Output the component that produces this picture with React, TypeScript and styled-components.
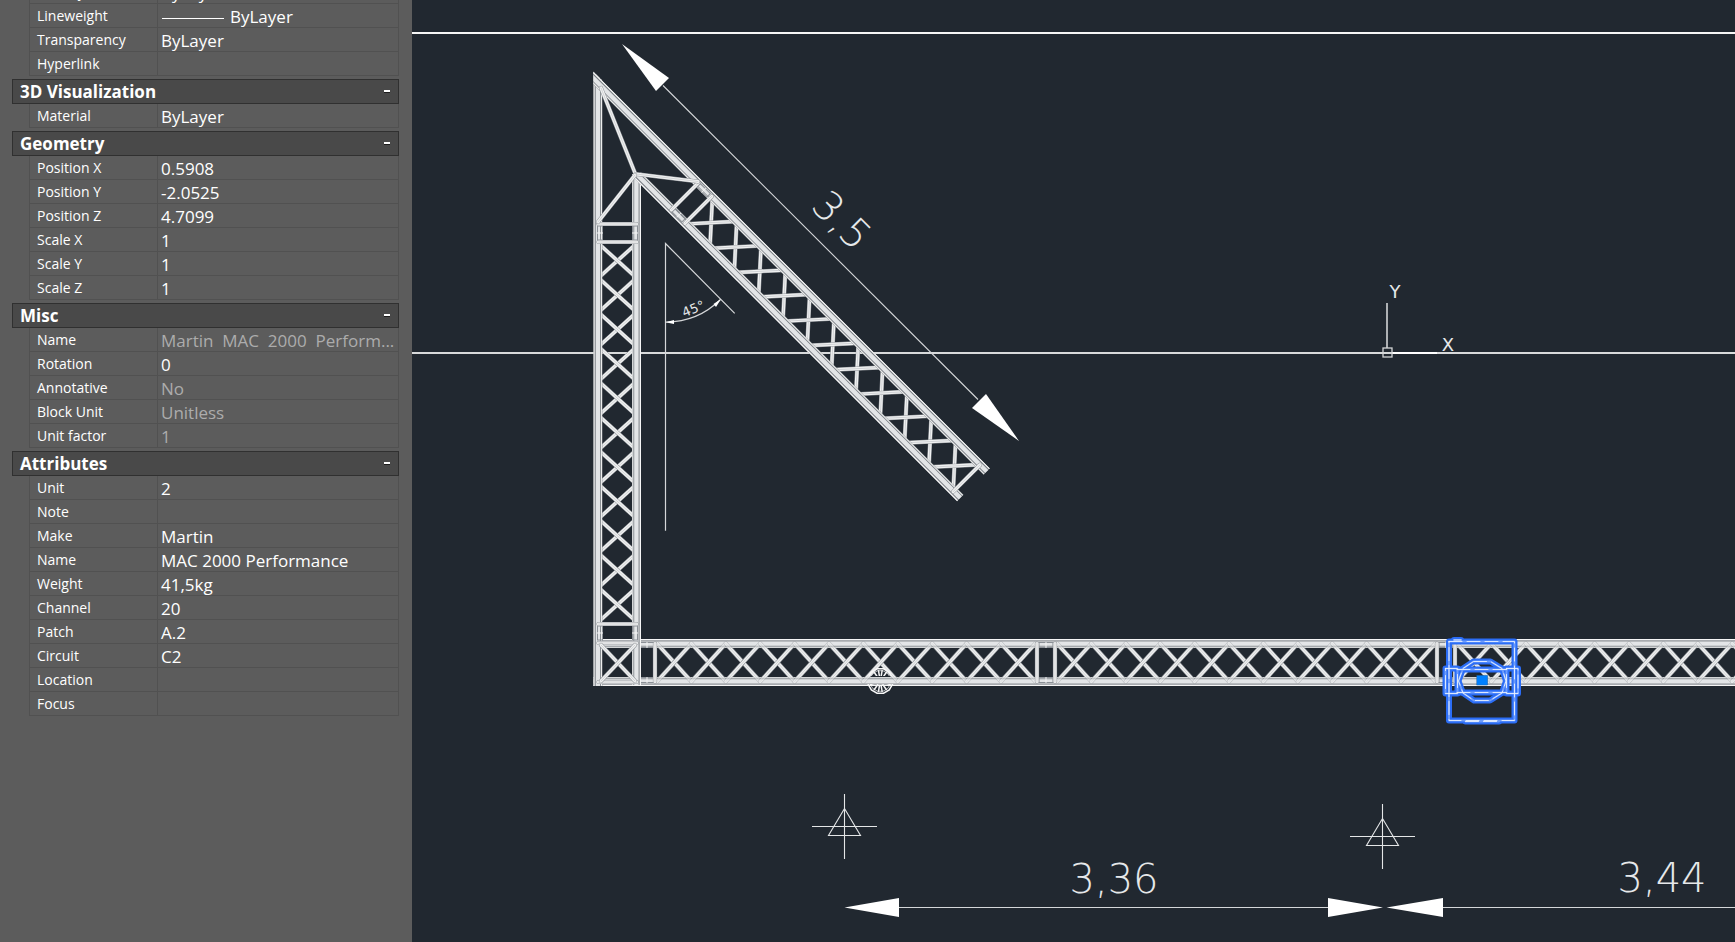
import React, { useState } from "react";
import styled, { createGlobalStyle } from "styled-components";

const GlobalStyle = createGlobalStyle`
  *, *::before, *::after { box-sizing: border-box; }
  body {
    margin: 0;
    background: #212830;
    font-family: "Open Sans", "Noto Sans", sans-serif;
  }
`;

/* ---------- Shell ---------- */

const Workspace = styled.div`
  display: flex;
  height: 100vh;
  overflow: hidden;
`;

const Palette = styled.aside`
  flex: 0 0 412px;
  overflow: hidden;
  background: #5c5c5c;
  color: #fff;
`;

/* The palette list is scrolled part of the way through its first row. */
const PaletteList = styled.div`
  display: flex;
  flex-direction: column;
  gap: 3px;
  margin: -20px 13px 0 12px;
`;

const ModelSpace = styled.main`
  flex: 1;
  min-width: 0;
  background: #212830;
`;

const Drawing = styled.svg`
  display: block;
  width: 100%;
  height: 100%;
`;

/* ---------- Property palette ---------- */

const Section = styled.section`
  display: flex;
  flex-direction: column;
`;

const SectionHeader = styled.button`
  display: flex;
  align-items: center;
  justify-content: space-between;
  height: 25px;
  padding: 0 8px 0 7px;
  border: 1px solid #303030;
  background: #494949;
  color: #fff;
  font: 700 17px/23px "Open Sans", "Noto Sans", sans-serif;
  text-align: left;
  cursor: pointer;
`;

const ToggleMark = styled.span`
  width: 6px;
  height: 3px;
  border-top: 2px solid #fff;
  border-bottom: 1px solid #1c1c1c;
`;

const PropertyTable = styled.table`
  margin-left: 17px;
  border-spacing: 0;
  border-left: 1px solid #515151;
  border-right: 1px solid #515151;
  table-layout: fixed;
`;

const PropertyName = styled.th`
  width: 127px;
  height: 24px;
  padding: 0 0 0 7px;
  border-bottom: 1px solid #515151;
  font-size: 14px;
  font-weight: 400;
  line-height: 23px;
  text-align: left;
  white-space: nowrap;
`;

const PropertyValue = styled.td<{ $locked?: boolean }>`
  height: 24px;
  padding: 2px 0 0 3px;
  border-left: 1px solid #515151;
  border-bottom: 1px solid #515151;
  color: ${(p) => (p.$locked ? "#acacac" : "#fff")};
  font-size: 17px;
  line-height: 21px;
  white-space: pre;
`;

const LineSample = styled.span`
  display: inline-block;
  width: 62px;
  height: 1px;
  margin: 0 6px 0 1px;
  background: #fff;
  vertical-align: middle;
`;

type Property = { name: string; value?: string; locked?: boolean; line?: boolean };
type Group = { title?: string; rows: Property[] };

const groups: Group[] = [
  {
    rows: [
      { name: "Plot style", value: "ByLayer" },
      { name: "Lineweight", value: "ByLayer", line: true },
      { name: "Transparency", value: "ByLayer" },
      { name: "Hyperlink" },
    ],
  },
  { title: "3D Visualization", rows: [{ name: "Material", value: "ByLayer" }] },
  {
    title: "Geometry",
    rows: [
      { name: "Position X", value: "0.5908" },
      { name: "Position Y", value: "-2.0525" },
      { name: "Position Z", value: "4.7099" },
      { name: "Scale X", value: "1" },
      { name: "Scale Y", value: "1" },
      { name: "Scale Z", value: "1" },
    ],
  },
  {
    title: "Misc",
    rows: [
      { name: "Name", value: "Martin  MAC  2000  Perform...", locked: true },
      { name: "Rotation", value: "0" },
      { name: "Annotative", value: "No", locked: true },
      { name: "Block Unit", value: "Unitless", locked: true },
      { name: "Unit factor", value: "1", locked: true },
    ],
  },
  {
    title: "Attributes",
    rows: [
      { name: "Unit", value: "2" },
      { name: "Note" },
      { name: "Make", value: "Martin" },
      { name: "Name", value: "MAC 2000 Performance" },
      { name: "Weight", value: "41,5kg" },
      { name: "Channel", value: "20" },
      { name: "Patch", value: "A.2" },
      { name: "Circuit", value: "C2" },
      { name: "Location" },
      { name: "Focus" },
    ],
  },
];

function PropertyGroup({ title, rows }: Group) {
  const [open, setOpen] = useState(true);
  return (
    <Section>
      {title && (
        <SectionHeader type="button" aria-expanded={open} onClick={() => setOpen(!open)}>
          {title}
          <ToggleMark />
        </SectionHeader>
      )}
      {open && (
        <PropertyTable>
          <tbody>
            {rows.map((row) => (
              <tr key={row.name}>
                <PropertyName scope="row">{row.name}</PropertyName>
                <PropertyValue $locked={row.locked}>
                  {row.line && <LineSample />}
                  {row.value}
                </PropertyValue>
              </tr>
            ))}
          </tbody>
        </PropertyTable>
      )}
    </Section>
  );
}

/* ---------- Drawing: trusses ---------- */

const CELL = 34.4;
const DEPTH = 47;

/* A tube running along x; `side` tells which way the inside of the truss lies. */
function Chord({ x, y, length, side }: { x: number; y: number; length: number; side: 1 | -1 }) {
  return (
    <g transform={`translate(${x} ${y}) scale(1 ${side})`}>
      <rect width={length} height={9} fill="#767b81" />
      <rect width={length} height={1.4} fill="#f6f6f6" />
      <rect y={2.4} width={length} height={4.4} fill="#e3e5e7" />
      <rect y={7.6} width={length} height={1.2} fill="#eceded" />
    </g>
  );
}

/* A brace between two nodes. */
function Brace({ p }: { p: [number, number, number, number] }) {
  const [x1, y1, x2, y2] = p;
  const ends = { x1, y1, x2, y2 };
  return (
    <g strokeLinecap="round">
      <line {...ends} stroke="#91959a" strokeWidth={4.2} />
      <line {...ends} stroke="#f1f2f2" strokeWidth={3.2} />
      <line {...ends} stroke="#c4c7ca" strokeWidth={0.7} />
    </g>
  );
}

function Lattice({ x, cells }: { x: number; cells: number }) {
  return (
    <g>
      {Array.from({ length: cells }, (_, i) => {
        const a = x + i * CELL;
        const b = a + CELL;
        return (
          <g key={i}>
            <Brace p={[a, 4.5, b, DEPTH - 4.5]} />
            <Brace p={[a, DEPTH - 4.5, b, 4.5]} />
          </g>
        );
      })}
    </g>
  );
}

function Bars({ at }: { at: number[] }) {
  return (
    <g>
      {at.map((x) => (
        <Brace key={x} p={[x, 4.5, x, DEPTH - 4.5]} />
      ))}
    </g>
  );
}

/* Pin joint where two truss lengths meet. */
function Joint({ x }: { x: number }) {
  return (
    <g stroke="#8b9096" strokeWidth={1} fill="none">
      <rect x={x - 7} y={3.5} width={14} height={5} />
      <rect x={x - 7} y={DEPTH - 8.5} width={14} height={5} />
      <path d={`M${x} 3V9M${x} ${DEPTH - 9}V${DEPTH - 3}`} stroke="#f4f4f4" />
    </g>
  );
}

function Trusses() {
  return (
    <g>
      <clipPath id="corner-miter">
        <path d="M593.3 71.5L1100 578.2V700H593.3Z" />
      </clipPath>

      <g transform="translate(0 639)">
        <Lattice x={657} cells={11} />
        <Lattice x={1057} cells={11} />
        <Lattice x={1457} cells={9} />
        <Chord x={597} y={0} length={1200} side={1} />
        <Chord x={593.3} y={DEPTH} length={1200} side={-1} />
        <g opacity={0.45}>
          <Lattice x={657} cells={11} />
          <Lattice x={1057} cells={11} />
          <Lattice x={1457} cells={9} />
        </g>
        <Joint x={647} />
        <Joint x={1046} />
        <Joint x={1446} />
        <Bars at={[655, 1037, 1055, 1437, 1455]} />
      </g>
      <Wheel />

      <g clipPath="url(#corner-miter)">
        <g transform="translate(641 0) rotate(90)">
          <Lattice x={243.5} cells={11} />
          <Chord x={174} y={0} length={511} side={1} />
          <Chord x={70} y={DEPTH + 0.7} length={616} side={-1} />
          <Joint x={233} />
          <Joint x={633} />
          <Bars at={[224, 242, 624, 643, 682]} />
        </g>
        <Brace p={[601, 645, 635, 681]} />
        <Brace p={[635, 645, 601, 681]} />

        <g transform="translate(594 72.3) rotate(45)">
          <Lattice x={172} cells={11} />
          <Chord x={-2} y={0} length={562} side={1} />
          <Chord x={104} y={DEPTH - 0.5} length={456} side={-1} />
          <Joint x={161} />
          <Bars at={[152, 171, 550.5]} />
        </g>
        <Brace p={[601, 88, 635, 173]} />
        <Brace p={[636, 174, 698, 181.5]} />
        <Brace p={[635, 175, 598, 222]} />
      </g>
    </g>
  );
}

function polygon(r: number, sides: number) {
  return Array.from({ length: sides }, (_, i) => {
    const a = ((i + 0.5) / sides) * Math.PI * 2;
    return `${r * Math.cos(a)},${r * Math.sin(a)}`;
  }).join(" ");
}

/* Pipe clamp seen end-on; the chord hides its middle. */
function Wheel() {
  const spokes = [20, 55, 80, 100, 125, 160].map((d) => (d * Math.PI) / 180);
  return (
    <g transform="translate(880.3 681)" stroke="#f6f6f6" strokeWidth={1.5} fill="none">
      <clipPath id="clamp-visible">
        <path d="M-15 -15H15V-5H-15ZM-15 3H15V15H-15Z" />
      </clipPath>
      <g clipPath="url(#clamp-visible)">
        <polygon points={polygon(12.6, 12)} />
        <polygon points={polygon(10.6, 12)} strokeWidth={0.7} />
        {[1, -1].map((s) =>
          spokes.map((a) => (
            <line
              key={`${s}${a}`}
              x1={4 * Math.cos(a)}
              y1={4 * s * Math.sin(a)}
              x2={11 * Math.cos(a)}
              y2={11 * s * Math.sin(a)}
            />
          ))
        )}
      </g>
    </g>
  );
}

/* ---------- Drawing: selected fixture ---------- */

const fixtureOutline = [
  "M1449 641.5H1514.5V720.5H1449Z",
  "M1445.5 668.5H1457.5V693.5H1445.5Z",
  "M1506.5 668.5H1518V693.5H1506.5Z",
  "M1457 669.5H1507M1457 692.5H1507",
  "M1473.5 661.5H1490.5L1502 668.5L1506 681L1502 693L1490 700.5H1474L1463 693L1458.5 681L1463 668.5Z",
  "M1465.5 721.5H1499",
  "M1454 640H1461",
];

function Fixture() {
  return (
    <g fill="none" strokeLinejoin="round" strokeLinecap="round">
      {fixtureOutline.map((d) => (
        <path key={d} d={d} stroke="#2b6df6" strokeWidth={6} />
      ))}
      {fixtureOutline.map((d) => (
        <path key={d} d={d} stroke="#6f9dfb" strokeWidth={2} />
      ))}
      {fixtureOutline.map((d) => (
        <path key={d} d={d} stroke="#e8f0ff" strokeWidth={0.9} strokeDasharray="13 5" />
      ))}
      <rect x={1477} y={675.5} width={10.5} height={9.5} fill="#0080ff" stroke="#1464b4" strokeWidth={0.6} />
    </g>
  );
}

/* ---------- Drawing: annotation ---------- */

const DimensionText = styled.text<{ $size: number; $weight?: number }>`
  fill: #e6e8ea;
  font-family: "DejaVu Sans", "DejaVu Sans Light", sans-serif;
  font-weight: ${(p) => p.$weight ?? 200};
  font-size: ${(p) => p.$size}px;
  text-anchor: middle;
`;

function Support({ x, y }: { x: number; y: number }) {
  return (
    <path
      transform={`translate(${x} ${y})`}
      d="M0 -32.5V32.5M-32.5 0H32.5M0 -18L16 9H-16Z"
      fill="none"
      stroke="#e4e6e7"
      strokeWidth={1.1}
    />
  );
}

function Dimensions() {
  return (
    <g>
      <g stroke="#d5d7d9" strokeWidth={1.2} fill="none">
        <path d="M663 85.5L978 399.5" strokeWidth={1.1} />
        <path d="M899 907.5H1328M1443 907.5H1900" />
        <path d="M665.5 530.7V243.5L734.7 313.3" />
        <path d="M666 322A78 78 0 0 0 720.5 299.5" />
      </g>
      <g fill="#fff">
        <path d="M622 44L669 78L656 91Z" />
        <path d="M1019 441L986 394L972 408Z" />
        <path d="M844.5 907.5L899 898V917Z" />
        <path d="M1383 907.5L1328 898V917Z" />
        <path d="M1386.5 907.5L1443 898V917Z" />
        <path d="M665.5 322.3L674 320V324Z" />
        <path d="M721 299L716 307L713.5 304Z" />
      </g>
      <DimensionText $size={40} transform="translate(832 230) rotate(45)">3,5</DimensionText>
      <DimensionText $size={40} x={1114} y={892.5}>3,36</DimensionText>
      <DimensionText $size={40} x={1662} y={892}>3,44</DimensionText>
      <DimensionText $size={13} $weight={400} transform="translate(695 313) rotate(-22)">45°</DimensionText>
    </g>
  );
}

function AxisIcon() {
  return (
    <g>
      <path d="M1387 303V348" stroke="#aeb1b4" strokeWidth={2} />
      <path d="M1392 353H1437" stroke="#fff" strokeWidth={2} />
      <rect x={1383} y={348} width={9} height={9} fill="none" stroke="#d3d5d6" strokeWidth={1.3} />
      <DimensionText $size={18} $weight={400} x={1395} y={298}>Y</DimensionText>
      <DimensionText $size={18} $weight={400} x={1448} y={351}>X</DimensionText>
    </g>
  );
}

export default function App() {
  return (
    <>
      <GlobalStyle />
      <Workspace>
        <Palette aria-label="Properties">
          <PaletteList>
            {groups.map((group, i) => (
              <PropertyGroup key={i} {...group} />
            ))}
          </PaletteList>
        </Palette>
        <ModelSpace>
          <Drawing viewBox="412 0 1323 942" preserveAspectRatio="xMinYMin slice">
            <path d="M412 33H1900" stroke="#f6f6f6" strokeWidth={2} />
            <path d="M412 353H1900" stroke="#d8dadb" strokeWidth={2} />
            <Trusses />
            <Fixture />
            <Support x={844.5} y={826.5} />
            <Support x={1382.5} y={836.5} />
            <Dimensions />
            <AxisIcon />
          </Drawing>
        </ModelSpace>
      </Workspace>
    </>
  );
}
